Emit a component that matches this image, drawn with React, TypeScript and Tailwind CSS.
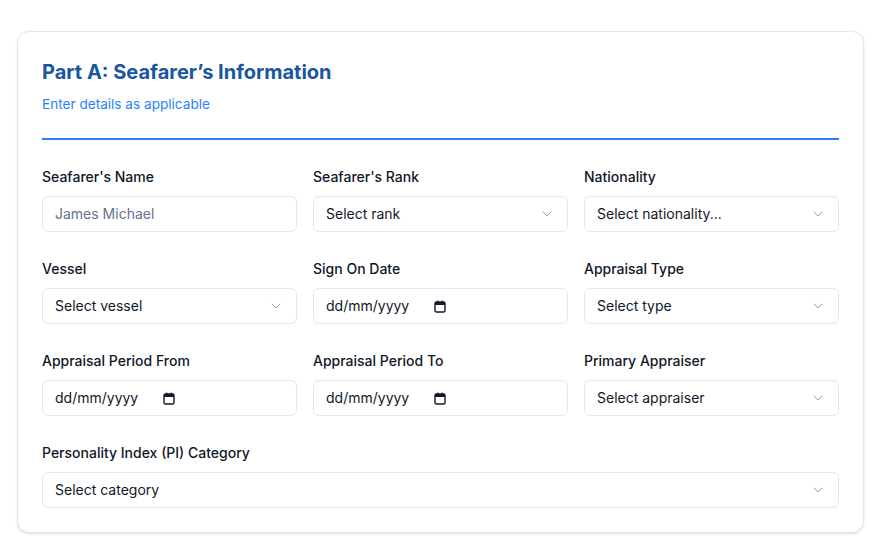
import React from "react";
import { ChevronDown } from "lucide-react";

const CalendarIcon = () => (
  <svg width="12" height="13" viewBox="0 0 12 13" fill="none" className="ml-[25px]">
    <rect x="1" y="2" width="10" height="10" rx="1.5" stroke="#111827" strokeWidth="1.4" />
    <rect x="1" y="2" width="10" height="3" fill="#111827" />
    <rect x="3" y="0.5" width="1.3" height="2.5" rx="0.5" fill="#111827" />
    <rect x="7.7" y="0.5" width="1.3" height="2.5" rx="0.5" fill="#111827" />
  </svg>
);

const boxClass =
  "h-9 w-full flex items-center rounded-md border border-slate-200 bg-white px-3 text-sm";

const Label = ({ children }: { children: React.ReactNode }) => (
  <label className="block text-sm font-medium text-gray-900 mb-[9px] leading-5">{children}</label>
);

const SelectBox = ({ text }: { text: string }) => (
  <div className={boxClass + " justify-between text-gray-900"}>
    <span>{text}</span>
    <ChevronDown size={16} strokeWidth={1.5} className="text-gray-400" />
  </div>
);

const DateBox = () => (
  <div className={boxClass + " text-gray-900"}>
    <span>dd/mm/yyyy</span>
    <CalendarIcon />
  </div>
);

const Field = ({ label, children }: { label: string; children: React.ReactNode }) => (
  <div>
    <Label>{label}</Label>
    {children}
  </div>
);

const App = () => {
  return (
    <div className="min-h-screen bg-white px-[17px] pt-[31px] pb-6 font-['Inter',sans-serif]">
      <div className="rounded-xl border border-slate-200 bg-white p-6 shadow-sm">
        <div className="border-b-2 border-blue-500 pb-6 mb-[27px]">
          <h2 className="text-xl font-bold text-[#1a56a0] leading-8">Part A: Seafarer’s Information</h2>
          <p className="mt-1.5 text-[13.6px] leading-5 text-blue-500">Enter details as applicable</p>
        </div>

        <div className="grid grid-cols-3 gap-x-4 gap-y-[27px]">
          <Field label="Seafarer's Name">
            <div className={boxClass + " text-slate-500"}>James Michael</div>
          </Field>
          <Field label="Seafarer's Rank">
            <SelectBox text="Select rank" />
          </Field>
          <Field label="Nationality">
            <SelectBox text="Select nationality..." />
          </Field>

          <Field label="Vessel">
            <SelectBox text="Select vessel" />
          </Field>
          <Field label="Sign On Date">
            <DateBox />
          </Field>
          <Field label="Appraisal Type">
            <SelectBox text="Select type" />
          </Field>

          <Field label="Appraisal Period From">
            <DateBox />
          </Field>
          <Field label="Appraisal Period To">
            <DateBox />
          </Field>
          <Field label="Primary Appraiser">
            <SelectBox text="Select appraiser" />
          </Field>

          <div className="col-span-3">
            <Field label="Personality Index (PI) Category">
              <SelectBox text="Select category" />
            </Field>
          </div>
        </div>
      </div>
    </div>
  );
};

export default App;
